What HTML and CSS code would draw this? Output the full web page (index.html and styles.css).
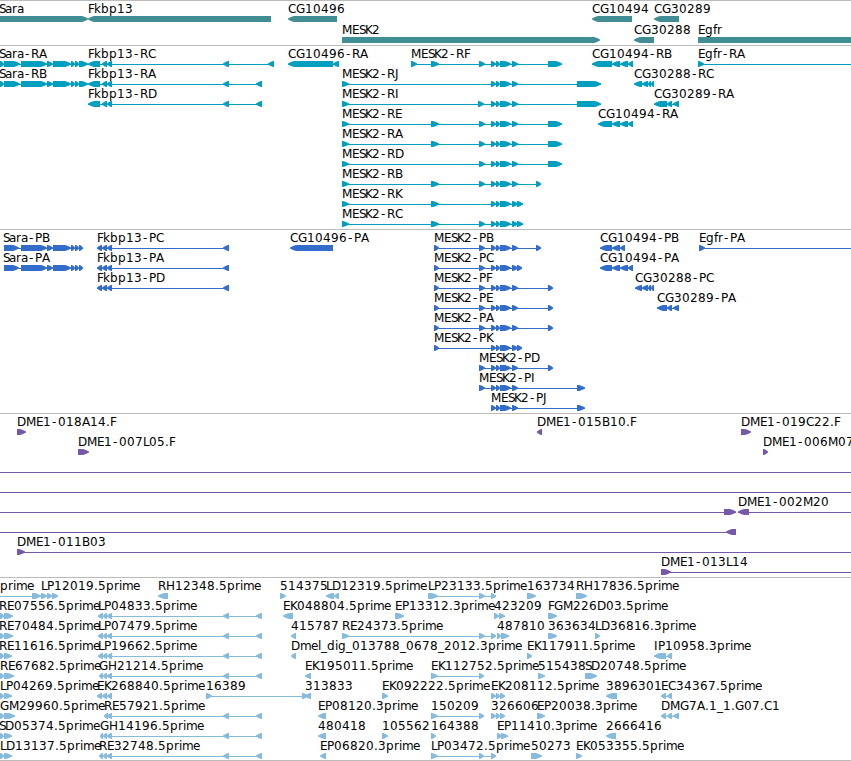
FILE: index.html
```
<!DOCTYPE html>
<html>
<head>
<meta charset="utf-8" />
<title>Genome Browser</title>
<link rel="stylesheet" href="styles.css">
</head>
<body>
	<div id="browser">
		<svg class="track genes" id="genes"></svg>
		<svg class="track transcripts" id="transcripts"></svg>
		<svg class="track proteins" id="proteins"></svg>
		<svg class="track clones" id="clones"></svg>
		<svg class="track ests" id="ests"></svg>
	</div>
<script src="tracks.js"></script>
</body>
</html>
```
FILE: styles.css
```
* {
	margin: 0;
	padding: 0;
}
html,body {
	width: 100%;
	height: 100%;
	overflow: hidden;
	background: #fff;
}
#browser {
	display: flex;
	flex-direction: column;
	border-bottom: 1px solid #bbb;
}
.track {
	display: block;
	box-sizing: border-box;
	width: 100%;
	border-top: 1px solid #bbb;
	overflow: hidden;
}
.track text {
	font-family: "DejaVu Sans", sans-serif;
	font-size: 12px;
	fill: #000;
}
.genes {
	height: 45px;
	color: #408e93;
}
.transcripts {
	height: 184px;
	color: #009fc0;
}
.proteins {
	height: 184px;
	color: #336dcc;
}
.clones {
	height: 164px;
	color: #7559a8;
}
.ests {
	height: 183px;
	color: #87bbdc;
}
.exon,.intron {
	fill: currentColor;
}
.intron {
	shape-rendering: crispEdges;
}
```
FILE: tracks.js
```
var NS = "http://www.w3.org/2000/svg";
var HEAD = 6;

// whole pixel advances, digits are 8
var advance = {
	A: 8, B: 8, C: 8, D: 9, E: 7, F: 6, G: 9, H: 9, I: 4, J: 4, K: 7, L: 6, M: 10,
	P: 7, R: 8, S: 6, a: 7, b: 8, d: 8, e: 7, f: 4, g: 8, i: 3, k: 7, l: 3, m: 11,
	p: 8, r: 5, ".": 4, "-": 7, "_": 6
};

function add(svg,name,attr) {
	var el = document.createElementNS(NS,name);
	for (var key in attr) {
		el.setAttribute(key,attr[key]);
	}
	svg.appendChild(el);
	return el;
}

function drawLabel(svg,text,x,y) {
	var xs = [];
	for (var i = 0; i < text.length; i++) {
		xs.push(x + (text[i] === "-" ? 1 : 0));
		x += advance[text[i]] || 8;
	}
	add(svg,"text",{x: xs.join(" "), y: y}).textContent = text;
}

function drawExon(svg,dir,a,b,y) {
	var h = Math.min(HEAD,b - a - 1);
	var tip = dir > 0 ? b : a;
	var tail = dir > 0 ? a : b;
	var neck = tip - dir*h;
	var mid = tip - dir*h/2;
	var pts = [
		tail,y, neck,y, mid,y+1, tip,y+2.4,
		tip,y+3.6, mid,y+5, neck,y+6, tail,y+6
	];
	add(svg,"polygon",{"class": "exon", points: pts.join(" ")});
}

// feature: [row, direction, label, "start-end ...", label x, line start, line end]
function drawTrack(id,pitch,features) {
	var svg = document.getElementById(id);
	features.forEach(function(f) {
		var y = f[0] * pitch;
		var exons = f[3] ? f[3].split(" ").map(function(s) {
			return s.split("-").map(Number);
		}) : [];
		var from = f[5] !== undefined ? f[5] : exons[0][0];
		var to = f[6] !== undefined ? f[6] : exons[exons.length-1][1];
		if (exons.length !== 1 || f[5] !== undefined) {
			add(svg,"rect",{"class": "intron", x: from, y: y+18, width: to-from, height: 1});
		}
		exons.forEach(function(e) {
			drawExon(svg,f[1],e[0],e[1],y+15);
		});
		if (f[2]) {
			drawLabel(svg,f[2],f[4] !== undefined ? f[4] : exons[0][0],y+12);
		}
	});
}

drawTrack("genes",21,[
	[0,1,"Sara","0-88",-1],
	[0,-1,"Fkbp13","88-271"],
	[0,-1,"CG10496","288-337"],
	[0,-1,"CG10494","592-632"],
	[0,-1,"CG30289","654-679"],
	[1,1,"MESK2","342-600"],
	[1,-1,"CG30288","634-654"],
	[1,1,"Egfr","698-870"]
]);

var sara = "0-4 4-20 21-47 47-53 53-71 71-75 75-79 79-88";
var fkbp = "88-100 102-107 107-112 223-229 ";
var mid = "491-496 496-500 500-511 512-518";
drawTrack("transcripts",20,[
	[0,1,"Sara-RA",sara,-1],
	[1,1,"Sara-RB",sara,-1],
	[0,-1,"Fkbp13-RC",fkbp + "268-274"],
	[1,-1,"Fkbp13-RA",fkbp + "256-262"],
	[2,-1,"Fkbp13-RD",fkbp + "256-262"],
	[0,-1,"CG10496-RA","288-333 333-339"],
	[0,1,"MESK2-RF","411-417 431-439 479-485 " + mid + " 548-562"],
	[1,1,"MESK2-RJ","342-349 " + mid + " 577-601"],
	[2,1,"MESK2-RI","342-349 478-484 " + mid + " 577-601"],
	[3,1,"MESK2-RE","342-349 431-439 479-485 " + mid + " 548-562"],
	[4,1,"MESK2-RA","342-349 431-439 479-485 " + mid + " 548-562"],
	[5,1,"MESK2-RD","342-349 479-485 " + mid + " 548-562"],
	[6,1,"MESK2-RB","342-349 431-439 479-485 " + mid + " 536-541"],
	[7,1,"MESK2-RK","342-349 431-439 " + mid + " 517-523"],
	[8,1,"MESK2-RC","342-349 431-439 479-485 " + mid + " 517-523"],
	[0,-1,"CG10494-RB","592-612 612-620 620-628 628-633"],
	[1,-1,"CG30288-RC","634-642 642-648 648-651 651-654"],
	[2,-1,"CG30289-RA","654-667 667-672 673-679"],
	[3,-1,"CG10494-RA","598-612 612-620 620-628 628-633"],
	[0,1,"Egfr-RA","698-704",698,698,870]
]);

sara = "4-19 21-47 47-53 53-71 71-75 75-79 79-83";
fkbp = "97-102 102-107 107-112 223-229";
drawTrack("proteins",20,[
	[0,1,"Sara-PB",sara,3],
	[1,1,"Sara-PA",sara,3],
	[0,-1,"Fkbp13-PC",fkbp],
	[1,-1,"Fkbp13-PA",fkbp],
	[2,-1,"Fkbp13-PD",fkbp],
	[0,-1,"CG10496-PA","290-333"],
	[0,1,"MESK2-PB","434-439 479-485 " + mid + " 536-541"],
	[1,1,"MESK2-PC","434-439 479-485 " + mid + " 517-522"],
	[2,1,"MESK2-PF","434-439 479-485 " + mid + " 548-553"],
	[3,1,"MESK2-PE","434-439 479-485 " + mid + " 548-553"],
	[4,1,"MESK2-PA","434-439 479-485 " + mid + " 548-553"],
	[5,1,"MESK2-PK","434-439 " + mid + " 517-522"],
	[6,1,"MESK2-PD","479-485 " + mid + " 548-553"],
	[7,1,"MESK2-PI","479-485 " + mid + " 577-585"],
	[8,1,"MESK2-PJ",mid + " 577-585"],
	[0,-1,"CG10494-PB","600-612 612-620 620-625"],
	[1,-1,"CG10494-PA","600-612 612-620 620-628 628-633"],
	[2,-1,"CG30288-PC","635-642 642-648 648-651 651-654"],
	[3,-1,"CG30289-PA","657-667 667-672 673-679"],
	[0,1,"Egfr-PA","699-705",699,699,870]
]);

drawTrack("clones",20,[
	[0,1,"DME1-018A14.F","17-26"],
	[0,-1,"DME1-015B10.F","537-542"],
	[0,1,"DME1-019C22.F","741-751"],
	[1,1,"DME1-007L05.F","78-89"],
	[1,1,"DME1-006M07","763-768"],
	[2,1,"","",0,0,870],
	[3,1,"","",0,0,870],
	[4,1,"","724-736",0,0,736],
	[4,-1,"DME1-002M20","738-749",738,738,870],
	[5,-1,"","726-736",0,0,736],
	[6,1,"DME1-011B03","17-25",17,17,870],
	[7,1,"DME1-013L14","661-671",661,661,870]
]);

var tail = " 223-229 256-262";
var left = "98-103 103-107 107-112" + tail;
drawTrack("ests",20,[
	[0,1,"prime","32-41",0,0,41],
	[0,1,"LP12019.5prime","41-47 47-52 52-58"],
	[0,-1,"RH12348.5prime","158-168"],
	[0,1,"514375","280-286"],
	[0,-1,"LD12319.5prime","326-334 334-339"],
	[0,1,"LP23133.5prime","428-438 479-485 491-496"],
	[0,1,"163734","527-536"],
	[0,1,"RH17836.5prime","576-587"],
	[1,1,"RE07556.5prime","0-4 4-13",-1],
	[1,-1,"LP04833.5prime",left],
	[1,-1,"EK048804.5prime","283-293"],
	[1,1,"EP13312.3prime","395-404"],
	[1,1,"423209","494-499 499-505"],
	[1,1,"FGM226D03.5prime","548-557"],
	[2,1,"RE70484.5prime","0-4 4-13",-1],
	[2,-1,"LP07479.5prime",left],
	[2,-1,"415787","291-296"],
	[2,1,"RE24373.5prime","342-349 479-485 491-496"],
	[2,1,"487810","497-501 501-509"],
	[2,1,"363634","548-557"],
	[2,1,"LD36816.3prime","595-600"],
	[3,1,"RE11616.5prime","0-4 4-12",-1],
	[3,-1,"LP19662.5prime",left],
	[3,-1,"Dmel_dig_013788_0678_2012.3prime","291-296"],
	[3,1,"EK117911.5prime","527-532"],
	[3,-1,"IP10958.3prime","654-666 667-672"],
	[4,1,"RE67682.5prime","0-4 4-14",0],
	[4,-1,"GH21214.5prime",left.replace("98","99")],
	[4,-1,"EK195011.5prime","305-311"],
	[4,1,"EK112752.5prime","431-438 479-484"],
	[4,1,"515438","538-545"],
	[4,1,"SD20748.5prime","585-597"],
	[5,1,"LP04269.5prime","0-4 4-12",0],
	[5,-1,"EK268840.5prime","97-102 102-107 107-112"],
	[5,1,"16389","206-212 302-308"],
	[5,-1,"313833","305-311"],
	[5,1,"EK092222.5prime","382-388"],
	[5,1,"EK208112.5prime","491-496 496-500 500-505"],
	[5,-1,"3896301","606-617"],
	[5,-1,"EC34367.5prime","661-666 667-672"],
	[6,1,"GM29960.5prime","0-4 4-15",0],
	[6,-1,"RE57921.5prime","104-108 107-112" + tail],
	[6,-1,"EP08120.3prime","318-326"],
	[6,1,"150209","431-438 479-484"],
	[6,1,"326606","491-496 496-500 500-505"],
	[6,1,"EP20038.3prime","537-545"],
	[6,-1,"DMG7A.1_1.G07.C1","661-666 667-672 673-679"],
	[7,1,"SD05374.5prime","0-4 4-12",-1],
	[7,-1,"GH14196.5prime",left.replace("98","100")],
	[7,-1,"480418","318-326"],
	[7,1,"105562","382-388"],
	[7,1,"164388","431-436"],
	[7,1,"EP11410.3prime","497-502 501-508"],
	[7,-1,"2666416","606-616"],
	[8,1,"LD13137.5prime","0-4 4-12",0],
	[8,-1,"RE32748.5prime",left.replace("98","99")],
	[8,-1,"EP06820.3prime","320-326"],
	[8,1,"LP03472.5prime","431-438 479-484 491-496"],
	[8,1,"50273","531-542"],
	[8,1,"EK053355.5prime","576-582"]
]);
```
